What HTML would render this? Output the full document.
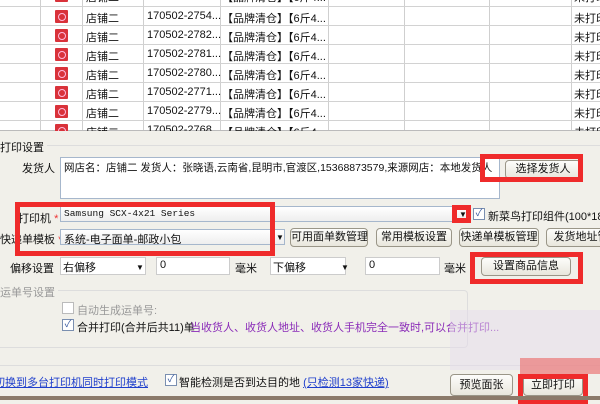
<!DOCTYPE html>
<html><head><meta charset="utf-8"><style>
*{margin:0;padding:0;box-sizing:border-box}
body{width:600px;height:400px;overflow:hidden;background:#f1f0ea;font-family:"Liberation Sans","Noto Sans CJK SC",sans-serif;font-size:11px;color:#111;position:relative}
.a{position:absolute;white-space:nowrap}
.tbl{position:absolute;left:0;top:0;width:600px;height:131px;background:#fff;overflow:hidden;border-bottom:1px solid #bbb}
.vl{position:absolute;top:0;height:131px;width:1px;background:#cfcfcf}
.hl{position:absolute;left:0;width:600px;height:1px;background:#d2d2d2}
.ic{position:absolute;width:13px;height:13px;background:#d9323a;border-radius:1px}
.ic:after{content:"";position:absolute;left:3px;top:3px;width:6px;height:6px;border:1px solid #fbd;border-radius:50%}
.in{position:absolute;background:#fff;border:1px solid #a6b7cc;overflow:hidden;white-space:nowrap}
.btn{position:absolute;border:1px solid #9a9688;border-radius:4px;background:linear-gradient(#fdfdfb,#e8e6dc);text-align:center;line-height:17px;white-space:nowrap;overflow:hidden}
.red{position:absolute;border:5px solid #ef2b2b}
.arr{position:absolute;font-size:8px}
.cb{position:absolute;width:12px;height:12px;border:1px solid #7a8fb0;background:#fff;font-size:10px;line-height:10px;text-align:center;color:#3a5ba0}
.rs{color:#e33}
</style></head><body>
<div class="tbl">
<div class="vl" style="left:40px"></div><div class="vl" style="left:82px"></div><div class="vl" style="left:143px"></div><div class="vl" style="left:220px"></div><div class="vl" style="left:328px"></div><div class="vl" style="left:404px"></div><div class="vl" style="left:489px"></div><div class="vl" style="left:571px"></div>
<div class="hl" style="top:6px"></div><div class="hl" style="top:25px"></div><div class="hl" style="top:44px"></div><div class="hl" style="top:63px"></div><div class="hl" style="top:82px"></div><div class="hl" style="top:101px"></div><div class="hl" style="top:120px"></div>
</div>
<div id="rows"></div>
<script>
var ids=["","2754","2782","2781","2780","2771","2779","2768"];
var tops=[-12,9,28,47,66,85,104,123],h="";
for(var i=0;i<8;i++){var t=tops[i];
h+='<div class="ic" style="left:55px;top:'+(t+1)+'px"></div>';
h+='<div class="a" style="left:86px;top:'+(t+1)+'px">店铺二</div>';
h+='<div class="a" style="left:147px;top:'+(t+1)+'px">170502-'+(ids[i]||'2750')+'...</div>';
h+='<div class="a" style="left:222px;top:'+(t+1)+'px">【品牌清仓】【6斤4...</div>';
h+='<div class="a" style="left:574px;top:'+(t+1)+'px">未打印</div>';}
document.getElementById('rows').innerHTML=h;
</script>
<div style="position:absolute;left:0;top:131px;width:600px;height:269px;background:#f1f0ea"></div>
<div style="position:absolute;left:0;top:145px;width:600px;height:1px;background:#ddd"></div>
<div class="a" style="left:0;top:139px;background:#f1f0ea;padding-right:3px">打印设置</div>
<div class="a" style="left:22px;top:160px">发货人</div>
<div class="in" style="left:60px;top:157px;width:440px;height:42px;padding:2px 3px;font-size:10.5px">网店名：店铺二 发货人：张晓语,云南省,昆明市,官渡区,15368873579,来源网店：本地发货人</div>
<div class="btn" style="left:505px;top:160px;width:76px;height:19px">选择发货人</div>
<div class="red" style="left:480px;top:154px;width:103px;height:28px"></div>
<div class="a" style="left:18px;top:210px">打印机 <span class="rs">*</span></div>
<div class="in" style="left:60px;top:206px;width:410px;height:16px;font-family:'Liberation Mono',monospace;font-size:9.5px;padding:1px 3px;background:linear-gradient(#fff,#eee)">Samsung SCX-4x21 Series</div>
<div class="arr" style="left:459px;top:210px">▼</div>
<div class="red" style="left:452px;top:205px;width:19px;height:18px"></div>
<div class="cb" style="left:473px;top:208px">✓</div>
<div class="a" style="left:488px;top:208px">新菜鸟打印组件(100*180)</div>
<div class="a" style="left:0;top:231px">快递单模板 <span class="rs">*</span></div>
<div class="in" style="left:60px;top:229px;width:225px;height:16px;padding:1px 3px;background:linear-gradient(#fff,#eee)">系统-电子面单-邮政小包</div>
<div class="arr" style="left:276px;top:233px">▼</div>
<div class="red" style="left:15px;top:202px;width:260px;height:54px"></div>
<div class="btn" style="left:290px;top:228px;width:78px;height:19px">可用面单数管理</div>
<div class="btn" style="left:376px;top:228px;width:76px;height:19px">常用模板设置</div>
<div class="btn" style="left:459px;top:228px;width:80px;height:19px">快递单模板管理</div>
<div class="btn" style="left:546px;top:228px;width:70px;height:19px">发货地址管</div>
<div class="a" style="left:10px;top:260px">偏移设置</div>
<div class="in" style="left:60px;top:257px;width:86px;height:18px;padding:1px 2px;border-color:#ccc">右偏移</div><div class="arr" style="left:136px;top:263px">▼</div>
<div class="in" style="left:156px;top:257px;width:74px;height:18px;padding:1px 3px;border-color:#ccc">0</div>
<div class="a" style="left:235px;top:260px">毫米</div>
<div class="in" style="left:270px;top:257px;width:76px;height:18px;padding:1px 2px;border-color:#ccc">下偏移</div><div class="arr" style="left:341px;top:263px">▼</div>
<div class="in" style="left:365px;top:257px;width:75px;height:18px;padding:1px 3px;border-color:#ccc">0</div>
<div class="a" style="left:444px;top:260px">毫米</div>
<div class="btn" style="left:481px;top:257px;width:90px;height:19px">设置商品信息</div>
<div class="red" style="left:470px;top:252px;width:113px;height:32px"></div>
<div style="position:absolute;left:0;top:290px;width:468px;height:58px;border:1px solid #ddd;border-left:none;border-radius:0 4px 4px 0"></div>
<div class="a" style="left:0;top:284px;color:#999;background:#f1f0ea;padding-right:3px">运单号设置</div>
<div class="cb" style="left:62px;top:302px;border-color:#bbb"></div>
<div class="a" style="left:77px;top:302px;color:#999">自动生成运单号:</div>
<div class="cb" style="left:62px;top:319px">✓</div>
<div class="a" style="left:77px;top:319px">合并打印(合并后共11)单</div>
<div class="a" style="left:190px;top:319px;color:#8a2bb8">当收货人、收货人地址、收货人手机完全一致时,可以合并打印...</div>
<div style="position:absolute;left:0;top:365px;width:600px;height:1px;background:#ddd"></div>
<div class="a" style="left:-6px;top:374px;color:#1f3fcc;text-decoration:underline">切换到多台打印机同时打印模式</div>
<div class="cb" style="left:165px;top:374px">✓</div>
<div class="a" style="left:179px;top:374px">智能检测是否到达目的地 <span style="color:#1f3fcc;text-decoration:underline">(只检测13家快递)</span></div>
<div style="position:absolute;left:450px;top:310px;width:150px;height:60px;background:rgba(230,220,235,.5)"></div>
<div style="position:absolute;left:520px;top:358px;width:80px;height:16px;background:rgba(235,120,120,.7)"></div>
<div class="btn" style="left:450px;top:374px;width:63px;height:22px;line-height:20px">预览面张</div>
<div class="btn" style="left:523px;top:374px;width:60px;height:22px;line-height:20px">立即打印</div>
<div class="red" style="left:518px;top:374px;width:70px;height:30px"></div>
<div style="position:absolute;left:0;top:396px;width:600px;height:4px;background:#8b7a6a"></div>
</body></html>
